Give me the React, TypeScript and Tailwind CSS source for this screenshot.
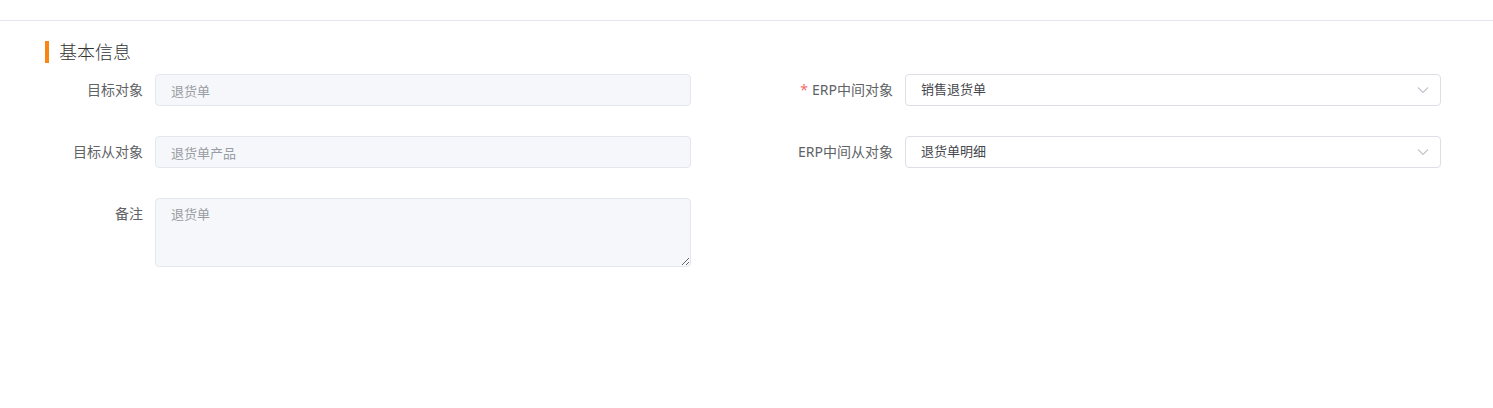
import React from "react"

const font = { fontFamily: '"Noto Sans", "Noto Sans CJK SC", sans-serif' }

const Label = ({ text, required }: { text: string; required?: boolean }) => (
  <label className="w-[110px] shrink-0 pr-3 text-right text-[14px] leading-[32px] text-[#606266]">
    {required && <span className="mr-1 text-[#f56c6c]">*</span>}
    {text}
  </label>
)

const DisabledInput = ({ value }: { value: string }) => (
  <input
    readOnly
    value={value}
    className="h-8 w-[536px] rounded border border-[#e4e7ed] bg-[#f5f7fa] px-[15px] text-[13px] text-[#999ca3] outline-none"
  />
)

const SelectBox = ({ value }: { value: string }) => (
  <div className="flex h-8 w-[536px] items-center justify-between rounded border border-[#dcdfe6] bg-white pl-[15px] pr-[11px] text-[13px] text-[#45474d]">
    <span>{value}</span>
    <svg width="12" height="8" viewBox="0 0 12 8" fill="none">
      <path d="M1 1.5 6 6.5 11 1.5" stroke="#c0c4cc" strokeWidth="1.1" />
    </svg>
  </div>
)

export default function App() {
  return (
    <div className="min-h-[408px] bg-white" style={font}>
      <div className="h-[21px] border-b border-[#e4e7ed]" />
      <div className="pl-[45px] pt-5">
        <div className="flex items-center gap-[10px]">
          <span className="h-[22px] w-[4px] bg-[#fa8517]" />
          <h2 className="text-[18px] font-light leading-[22px] text-[#333333]">基本信息</h2>
        </div>

        <div className="mt-[11px] grid grid-cols-[646px_646px] gap-x-[104px] gap-y-[30px]">
          <div className="flex">
            <Label text="目标对象" />
            <DisabledInput value="退货单" />
          </div>
          <div className="flex">
            <Label text="ERP中间对象" required />
            <SelectBox value="销售退货单" />
          </div>

          <div className="flex">
            <Label text="目标从对象" />
            <DisabledInput value="退货单产品" />
          </div>
          <div className="flex">
            <Label text="ERP中间从对象" />
            <SelectBox value="退货单明细" />
          </div>

          <div className="flex">
            <Label text="备注" />
            <textarea
              readOnly
              value="退货单"
              className="h-[69px] w-[536px] rounded border border-[#e4e7ed] bg-[#f5f7fa] px-[15px] py-[5px] text-[13px] leading-[20px] text-[#999ca3] outline-none"
            />
          </div>
        </div>
      </div>
    </div>
  )
}
